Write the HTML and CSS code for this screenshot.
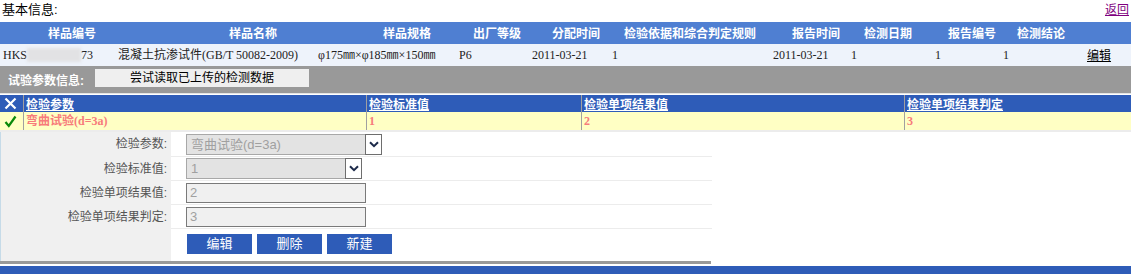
FILE: index.html
```html
<!DOCTYPE html>
<html lang="zh-CN">
<head>
    <meta charset="UTF-8">
    <title>检测信息</title>
    <link rel="stylesheet" href="styles.css">
</head>
<body>
    <div class="basic-bar">
        <span class="basic-title">基本信息:</span>
        <a class="back-link" href="#">返回</a>
    </div>

    <!-- 基本信息表 -->
    <div class="info-head">
        <span>样品编号</span>
        <span>样品名称</span>
        <span>样品规格</span>
        <span>出厂等级</span>
        <span>分配时间</span>
        <span>检验依据和综合判定规则</span>
        <span>报告时间</span>
        <span>检测日期</span>
        <span>报告编号</span>
        <span>检测结论</span>
    </div>
    <div class="info-row">
        <span>HKS<i class="masked"></i>73</span>
        <span>混凝土抗渗试件(GB/T 50082-2009)</span>
        <span>φ175㎜×φ185㎜×150㎜</span>
        <span>P6</span>
        <span>2011-03-21</span>
        <span>1</span>
        <span>2011-03-21</span>
        <span>1</span>
        <span>1</span>
        <span>1</span>
        <span><a class="edit-link" href="#">编辑</a></span>
    </div>

    <div class="param-bar">
        <span class="param-title">试验参数信息:</span>
        <span class="read-btn">尝试读取已上传的检测数据</span>
    </div>

    <!-- 参数列表 -->
    <div class="param-grid param-head">
        <span class="icon-cell">
            <svg width="13" height="13" viewBox="0 0 13 13"><path d="M1.5 1.5 L11.5 11.5 M11.5 1.5 L1.5 11.5" stroke="#fff" stroke-width="2.2" fill="none"/></svg>
        </span>
        <span class="cell">检验参数</span>
        <span class="cell">检验标准值</span>
        <span class="cell">检验单项结果值</span>
        <span class="cell">检验单项结果判定</span>
    </div>
    <div class="param-grid param-row">
        <span class="icon-cell">
            <svg width="13" height="13" viewBox="0 0 13 13"><path d="M1.5 7 L4.8 11 L11.5 1.5" stroke="#0a8a0a" stroke-width="2.2" fill="none"/></svg>
        </span>
        <span class="cell">弯曲试验(d=3a)</span>
        <span class="cell">1</span>
        <span class="cell">2</span>
        <span class="cell">3</span>
    </div>

    <!-- 参数编辑 -->
    <div class="edit-form">
        <div class="form-label">检验参数:</div>
        <div class="form-field">
            <span class="select-box wide">弯曲试验(d=3a)</span>
            <span class="select-arrow"><svg width="10" height="7" viewBox="0 0 10 7"><path d="M1 1.2 L5 5.2 L9 1.2" stroke="#1c2a4a" stroke-width="2" fill="none"/></svg></span>
        </div>

        <div class="form-label">检验标准值:</div>
        <div class="form-field">
            <span class="select-box narrow">1</span>
            <span class="select-arrow"><svg width="10" height="7" viewBox="0 0 10 7"><path d="M1 1.2 L5 5.2 L9 1.2" stroke="#1c2a4a" stroke-width="2" fill="none"/></svg></span>
        </div>

        <div class="form-label">检验单项结果值:</div>
        <div class="form-field">
            <span class="text-box">2</span>
        </div>

        <div class="form-label">检验单项结果判定:</div>
        <div class="form-field">
            <span class="text-box">3</span>
        </div>

        <div class="form-label"></div>
        <div class="form-field buttons">
            <button class="btn">编辑</button>
            <button class="btn">删除</button>
            <button class="btn">新建</button>
        </div>
    </div>

    <div class="foot-gray"></div>
    <div class="foot-blue"></div>
</body>
</html>
```

FILE: styles.css
```css
* {
    margin: 0;
    padding: 0;
    box-sizing: border-box;
}

body {
    font-family: "Liberation Sans", "Noto Sans CJK SC", sans-serif;
    font-size: 12px;
    color: #000;
    background: #fff;
    width: 1131px;
}

/* 顶部标题 */
.basic-bar {
    height: 22px;
    display: flex;
    justify-content: space-between;
    align-items: flex-start;
    padding: 1px 2px 0 2px;
}

.basic-title {
    font-size: 13px;
    line-height: 18px;
}

.back-link {
    font-size: 12px;
    line-height: 18px;
    color: #800080;
    text-decoration: underline;
}

/* 基本信息表 */
.info-head {
    height: 22px;
    background: #4f7fd2;
    color: #fff;
    font-family: "Noto Sans CJK SC", sans-serif;
    font-weight: bold;
    font-size: 12px;
    line-height: 22px;
    display: grid;
    grid-template-columns: 181px 154px 90px 79px 72px 168px 72px 84px 69px auto;
    padding-left: 48px;
    white-space: nowrap;
}

.info-row {
    height: 22px;
    background: #eef3fb;
    font-family: "Liberation Serif", "Noto Sans CJK SC", serif;
    font-size: 12px;
    line-height: 22px;
    color: #222;
    display: grid;
    grid-template-columns: 115px 200px 141px 73px 80px 161px 78px 84px 68px 84px auto;
    padding-left: 3px;
    white-space: nowrap;
}

.masked {
    display: inline-block;
    width: 54px;
    height: 14px;
    vertical-align: -3px;
    background: #e2e2e4;
    filter: blur(1.5px);
}

.edit-link {
    color: #000;
    text-decoration: underline;
    font-family: "Noto Sans CJK SC", sans-serif;
}

/* 试验参数信息 */
.param-bar {
    height: 28px;
    background: #999;
    display: flex;
    align-items: center;
    padding-left: 8px;
    border-bottom: 1px solid #e4e4e4;
}

.param-title {
    color: #fff;
    font-weight: bold;
    font-size: 12px;
    width: 87px;
}

.read-btn {
    width: 214px;
    height: 18px;
    background: #efefef;
    text-align: center;
    font-size: 12px;
    line-height: 18px;
    margin-top: -3px;
}

.param-grid {
    display: grid;
    grid-template-columns: 23px 343px 215px 323px auto;
    font-size: 12px;
    white-space: nowrap;
}

.param-grid .cell {
    border-left: 1px solid #a0a0a0;
    padding-left: 2px;
}

.icon-cell {
    display: flex;
    align-items: center;
    padding-left: 4px;
}

.param-head {
    height: 17px;
    margin-top: 1px;
    background: #2e5cb8;
    line-height: 17px;
}

.param-head .cell {
    color: #fff;
    font-family: "Noto Sans CJK SC", sans-serif;
    font-weight: bold;
    text-decoration: underline;
}

.param-row {
    height: 20px;
    background: #ffffc4;
    border-bottom: 2px solid #ececec;
    line-height: 18px;
}

.param-row .cell {
    color: #f77b7b;
    font-family: "Liberation Serif", "Noto Sans CJK SC", serif;
    font-weight: bold;
}

/* 编辑表单 */
.edit-form {
    width: 711px;
    display: grid;
    grid-template-columns: 170px 541px;
    grid-template-rows: 25px 24px 24px 24px 32px;
    border-left: 1px solid #c6dbe8;
}

.form-label {
    background: #f0f0f0;
    color: #555;
    text-align: right;
    padding-right: 4px;
    font-size: 12px;
    line-height: 24px;
}

.form-field {
    display: flex;
    align-items: center;
    padding-left: 15px;
    border-bottom: 1px solid #ececec;
}

.select-box {
    height: 21px;
    background: #e3e3e3;
    border: 1px solid #a8a8a8;
    color: #a0a0a0;
    font-size: 13px;
    line-height: 19px;
    padding-left: 4px;
}

.select-box.wide {
    width: 180px;
}

.select-box.narrow {
    width: 160px;
}

.select-arrow {
    width: 17px;
    height: 21px;
    background: #fff;
    border: 1px solid #6e6e6e;
    display: flex;
    align-items: center;
    justify-content: center;
    margin-left: -1px;
}

.text-box {
    width: 180px;
    height: 20px;
    background: #f0f0f0;
    border: 1px solid #7a7a7a;
    color: #a0a0a0;
    font-size: 13px;
    line-height: 18px;
    padding-left: 3px;
}

.form-field.buttons {
    border-bottom: none;
    gap: 5px;
    padding-left: 16px;
    align-items: flex-start;
    padding-top: 5px;
}

.btn {
    width: 65px;
    height: 20px;
    border: none;
    background: #2e5cb8;
    color: #fff;
    font-family: "Liberation Sans", "Noto Sans CJK SC", sans-serif;
    font-size: 13px;
    line-height: 20px;
}

.foot-gray {
    width: 711px;
    height: 3px;
    background: #999;
}

.foot-blue {
    height: 8px;
    background: #2e5cb8;
    margin-top: 2px;
}
```
